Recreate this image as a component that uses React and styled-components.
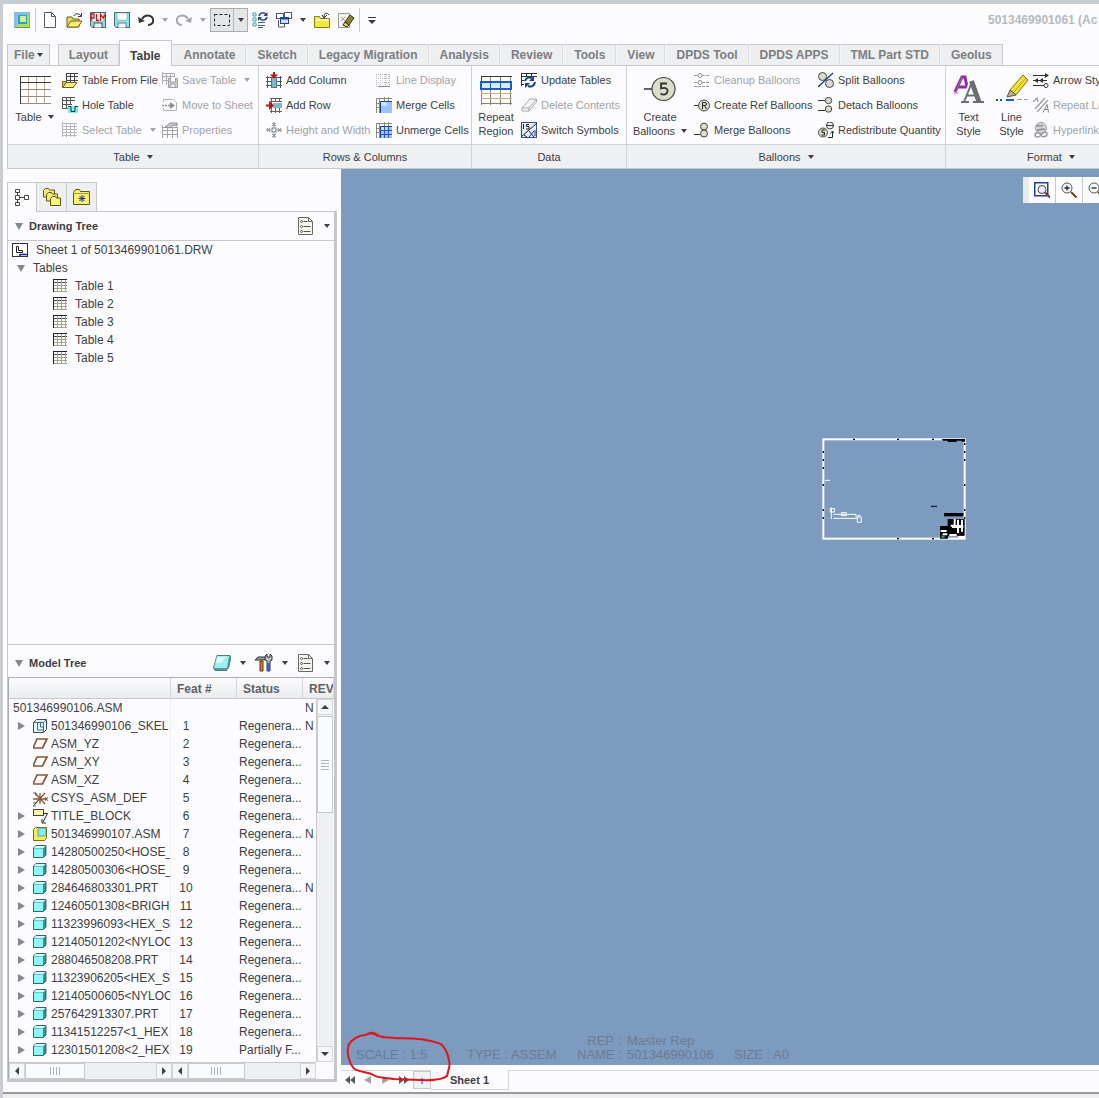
import React from "react";
import styled, { createGlobalStyle } from "styled-components";

const GlobalStyle = createGlobalStyle`
  * { box-sizing: border-box; }
  body {
    margin: 0;
    overflow: hidden;
    background: #fcfcfe;
    color: #3c3e42;
    font-family: "Liberation Sans", Arial, sans-serif;
    font-size: 11px;
  }
  button {
    font: inherit;
    color: inherit;
    background: none;
    border: 0;
    padding: 0;
    margin: 0;
  }
`;

/* ---------- icons ---------- */

const Svg = styled.svg`
  display: block;
  flex: none;
`;

const smallGrid = (
  <>
    <path d="M.5 0v13M0 .5h15" stroke="#222" fill="none" />
    <path d="M0 3.500h15" stroke="#444" fill="none" />
    <path d="M4.500 1v12M8.500 1v12M12.500 1v12M1 6.500h14M1 9.500h14M1 12.500h14" stroke="#a3a48c" fill="none" />
  </>
);

const greyGrid = (
  <path d="M.5 0v15M0 1.500h15M0 4.500h15M4.500 1v14M8.500 1v14M12.500 1v14M0 7.500h15M0 10.500h15M0 13.500h15" stroke="#b5b7ba" fill="none" />
);

const blueCells = (
  <>
    <path d="M0 1.500h16M.5 1v15M3.500 1v15M0 6.500h4M0 10.500h4M8.500 0v4M12.500 0v4" stroke="#888a78" fill="none" />
    <path d="M4 4h12v12H4z" fill="#9cc4f6" />
    <path d="M4 4h7v5H4z" fill="#cfe3fc" />
    <path d="M4.500 16V4.500H16" stroke="#1e3f9c" fill="none" />
  </>
);

const icons = {
  app: (
    <>
      <rect width="16" height="16" fill="#b4dc50" />
      <path d="M0 0h16v3H3v13H0z" fill="#8bbce0" />
      <rect x="4" y="3" width="9" height="9" fill="#2aa0c8" />
      <rect x="6" y="4" width="6" height="6" fill="#d5ee90" />
      <path d="M1 15.500h15V2" stroke="#5fa048" fill="none" />
    </>
  ),
  newFile: <path d="M2.500.5h7l4 4v11h-11zM9.500.5v4h4" fill="#fff" stroke="#55585c" />,
  open: (
    <>
      <path d="M1 5h5l1 2h6v8H1z" fill="#e9d85c" stroke="#6e6215" />
      <path d="M1 15l4-6h11l-4 6z" fill="#fff07a" stroke="#6e6215" />
      <path d="M8 4c1-3 5-3 7 0M15.500 1v3.500H12" stroke="#333" fill="none" />
    </>
  ),
  plm: (
    <>
      <path d="M.5.5h15v15H2l-1.500-2z" fill="#8cdce4" stroke="#466" />
      <rect x="3" y="1" width="10" height="8" fill="#fff" />
      <rect x="4" y="11" width="8" height="5" fill="#eee" stroke="#555" />
      <path d="M1 9V2h3v4H1M6.500 2v6.500H9M10.500 9V2L13 6l2.500-4v7" stroke="#d01818" strokeWidth="1.300" fill="none" />
    </>
  ),
  save: (
    <>
      <path d="M.5.500h15v15H2l-1.500-2z" fill="#8ce4ea" stroke="#3f6a70" />
      <rect x="3" y="1" width="10" height="7" fill="#fff" stroke="#7aa" strokeWidth=".6" />
      <rect x="4" y="11" width="8" height="5" fill="#f4f4f4" stroke="#567" strokeWidth=".8" />
    </>
  ),
  undo: (
    <>
      <path d="M4 7c3-5 10-4 11 0 1 4-2 6-5 6" stroke="#333" strokeWidth="2" fill="none" />
      <path d="M0 5l1 6 6-2z" fill="#333" />
    </>
  ),
  redo: (
    <>
      <path d="M12 7C9 2 2 3 1 7c-1 4 2 6 5 6" stroke="#a4a6a9" strokeWidth="2" fill="none" />
      <path d="M16 5l-1 6-6-2z" fill="#a4a6a9" />
    </>
  ),
  marquee: <rect x=".5" y="2.500" width="15" height="11" fill="none" stroke="#222" strokeDasharray="3 2" />,
  regen: (
    <>
      <path d="M1 1h3v3H1zM1 6h3v3H1zM1 11h3v3H1z" fill="#e6fafa" stroke="#3aa" />
      <path d="M6 10.500h7M6 13.500h7M6 15.500h5" stroke="#556" />
      <path d="M7 4c1-4 6-4 7-1M15 5c-1 4-6 4-7 1" stroke="#24408c" strokeWidth="1.500" fill="none" />
      <path d="M15.500 0v4h-4zM6 9V5h4z" fill="#24408c" />
    </>
  ),
  windows: (
    <>
      <rect x=".5" y="1.500" width="7" height="5" fill="#fff" stroke="#556" />
      <rect x="8.500" y=".5" width="7" height="6" fill="#fff" stroke="#556" />
      <rect x="4.500" y="5.500" width="8" height="6" fill="#cfe0f8" stroke="#1e3f9c" />
      <path d="M4 6.500h9" stroke="#1e3f9c" strokeWidth="2" />
      <path d="M2.500 8v7h6v-3" fill="none" stroke="#556" />
    </>
  ),
  folderUp: (
    <>
      <path d="M.5 4.500h5l1 2h9v9H.500z" fill="#f4e63c" stroke="#8a7c10" />
      <path d="M2 8h13" stroke="#fffac0" strokeWidth="2" />
      <path d="M15 3c-2-3-5-2-5 2M8 3l2 3 3-3" stroke="#222" fill="none" />
    </>
  ),
  eraseDisplay: (
    <>
      <path d="M.5 1.500h11v14H.5z" fill="#f4f4ea" stroke="#999" />
      <path d="M3 5l4 4M7 5l-4 4" stroke="#aaa" />
      <path d="M7 10l5-7 4 3-5 7z" fill="#8a8424" stroke="#333" />
      <path d="M5 13l2-3 4 3-2 2z" fill="#e9d85c" stroke="#222" />
    </>
  ),
  tableBig: (
    <>
      <path d="M9.500 2v28M17.500 2v28M25.500 2v28" stroke="#b5a995" fill="none" />
      <path d="M1 15.500h31M1 22.500h31M1 29.500h31" stroke="#8f8f7a" fill="none" />
      <path d="M1 2.500h31M1 8.500h31M1.500 2v28" stroke="#3a3a32" fill="none" />
    </>
  ),
  tableFile: (
    <>
      <g transform="translate(4 1)"><path d="M.5 0v12M0 .5h12M0 3.500h12M4.500 0v12M8.500 0v12M0 7.500h12" stroke="#444" fill="none" /></g>
      <path d="M.5 9.500h4l1 2h6v4H.5z" fill="#d8c85c" stroke="#6e6215" />
      <path d="M1 15.500l3-5h11l-4 5z" fill="#fdf07c" stroke="#6e6215" />
    </>
  ),
  holeTable: (
    <>
      <path d="M.5 0v12M0 .500h13M0 3.500h13M4.500 0v12M8.500 0v8M0 7.500h10M0 11.500h6" stroke="#555" fill="none" />
      <path d="M6 9h10v7H6z" fill="#7df0f6" />
      <path d="M6 9.500h3v5h4v-5h3" stroke="#134" fill="none" />
    </>
  ),
  selectTable: greyGrid,
  saveTable: (
    <>
      <path d="M.5 0v12M0 1.500h13M0 4.500h13M4.500 1v12M8.500 1v5M12.500 1v4M0 8.500h7" stroke="#a9abad" fill="none" />
      <path d="M6.500 6.500h9v9h-9z" fill="#d0d1d2" stroke="#9c9ea0" />
      <path d="M8.500 6v4h5V6M9 15v-3h4v3" fill="#fff" stroke="#9c9ea0" />
    </>
  ),
  moveSheet: (
    <>
      <path d="M1.500 5V2.500h10l3 3v8h-13V11" fill="none" stroke="#b0b2b4" />
      <path d="M0 8.500h2M3 8.500h2M6 8.500h4" stroke="#8a8c8f" strokeWidth="1.500" />
      <path d="M8 5l5 3.500L8 12z" fill="#8a8c8f" />
    </>
  ),
  properties: (
    <>
      <path d="M.5 3v13M0 5.500h16M0 8.500h16M5.500 6v10M10.500 6v10M15.500 6v10M0 12.500h16" stroke="#a0a2a5" fill="none" />
      <path d="M3 5l5-4h7v3l-4-1-3 3z" fill="#c8caca" stroke="#8d8f91" />
    </>
  ),
  addColumn: (
    <>
      <path d="M0 5.500h16M0 9.500h5M11 9.500h5M0 13.500h5M11 13.500h5M1.500 4v12M14.500 4v12" stroke="#555" fill="none" />
      <rect x="5.500" y="5.500" width="5" height="10" fill="#7fb8cc" stroke="#467c90" />
      <path d="M8 0v4" stroke="#c21414" strokeWidth="2" />
      <path d="M4 2.500h8L8 7z" fill="#c21414" />
    </>
  ),
  addRow: (
    <>
      <path d="M4 1.500h12M4 4.500h12M5.500 1v15M9.500 1v4M13.500 1v4M4 14.500h12M9.500 11v5M13.500 11v5" stroke="#665f50" fill="none" />
      <rect x="7" y="6" width="9" height="5" fill="#7fb8cc" />
      <path d="M0 8.500h4" stroke="#c21414" strokeWidth="2" />
      <path d="M3 4v9l5-4.500z" fill="#c21414" />
    </>
  ),
  heightWidth: (
    <>
      <rect x="6" y="6" width="4" height="4" fill="none" stroke="#777" />
      <path d="M8 0v5M6 1l4 3M10 1L6 4M8 11v5M6 12l4 3M10 12l-4 3M0 8h5M1 6l3 4M1 10l3-4M11 8h5M12 6l3 4M12 10l3-4" stroke="#808285" strokeWidth=".9" />
    </>
  ),
  lineDisplay: (
    <>
      <path d="M.5 2v13M0 2.500h14M4.500 2v12M9.500 2v12M13.500 2v12M0 6.500h14M0 10.500h14" stroke="#b4b6b8" strokeDasharray="1 1" fill="none" />
      <path d="M2 14.500h12" stroke="#888" />
    </>
  ),
  mergeCells: blueCells,
  unmergeCells: (
    <>
      {blueCells}
      <path d="M8.500 4v12M12.500 4v12M4 8.500h12M4 12.500h12" stroke="#2b55b8" fill="none" />
    </>
  ),
  repeatBig: (
    <>
      <path d="M1.500 2v29M10.500 2v29M20.500 2v29M30.500 2v29M1 29.500h31" stroke="#85856a" fill="none" />
      <path d="M1 2.500h31M1.500 2v6" stroke="#3a3a32" fill="none" />
      <path d="M1 19.500h31M1 24.500h31" stroke="#d4a878" fill="none" />
      <rect x="1" y="8" width="30" height="7" fill="#d4ecfc" stroke="#1b5cc4" strokeWidth="2" />
      <path d="M10.500 9v5M20.500 9v5" stroke="#1b5cc4" />
    </>
  ),
  updateTables: (
    <>
      <path d="M.5 1v13M0 1.500h16M0 4.500h16M5.500 1v3M10.500 1v3M0 8.500h3M0 12.500h3" stroke="#333" fill="none" />
      <path d="M4 9c1-4 5-4 7-3M14 10c-1 5-5 5-7 4" stroke="#173f9c" strokeWidth="2" fill="none" />
      <path d="M13 4v5H8zM4 16v-5h5z" fill="#173f9c" />
    </>
  ),
  deleteContents: (
    <>
      <path d="M1 11L9 2h6.500v3L8 14H1z" fill="#f5f5f5" stroke="#a5a7a9" />
      <path d="M1 11h7l7.500-9M8 11v3" stroke="#a5a7a9" fill="none" />
    </>
  ),
  switchSymbols: (
    <>
      <rect x=".5" y=".5" width="15" height="15" fill="#e4eefa" stroke="#3a4a8a" />
      <path d="M2.500 2v5M8 2.500H5.500v2H8V7H5M0 15L16 1" stroke="#222" fill="none" />
      <path d="M8 9l5 6M13 9l-5 6M14 8v6M3 13l3 2" stroke="#1c2c80" />
    </>
  ),
  balloonBig: (
    <>
      <path d="M0 15h8" stroke="#333" strokeWidth="1.500" />
      <circle cx="19.500" cy="15" r="11.500" fill="#dcdccb" stroke="#444" strokeWidth="1.200" />
      <path d="M23 9.500h-6v5c5-1.500 7 .5 6.500 3-.5 3-4 4-7 2" stroke="#333" strokeWidth="1.800" fill="none" />
    </>
  ),
  cleanup: (
    <>
      <path d="M0 3.500h3M8 3.500h8M0 10.500h3M8 10.500h8M0 14.500h16" stroke="#999" strokeDasharray="3 1" />
      <circle cx="6" cy="3.500" r="2" fill="#fff" stroke="#888" />
      <circle cx="6" cy="10.500" r="2" fill="#fff" stroke="#888" />
    </>
  ),
  refBalloon: (
    <>
      <path d="M0 8.500h5" stroke="#333" />
      <circle cx="10" cy="8.500" r="5.500" fill="#dcdccb" stroke="#444" />
      <path d="M8.500 12V5.500h2.500c2 0 2 3 0 3H8M10.500 8.500L12.500 12" stroke="#222" fill="none" />
    </>
  ),
  mergeBalloons: (
    <>
      <path d="M0 12.500h6" stroke="#333" />
      <circle cx="10" cy="4.500" r="3.500" fill="#dcdccb" stroke="#444" />
      <circle cx="10" cy="11.500" r="3.500" fill="#dcdccb" stroke="#444" />
    </>
  ),
  splitBalloons: (
    <>
      <circle cx="4.500" cy="4.500" r="4" fill="#dcdccb" stroke="#444" />
      <circle cx="11.500" cy="11.500" r="4" fill="#dcdccb" stroke="#444" />
      <path d="M0 15L15 1" stroke="#2038a0" strokeWidth="1.300" />
    </>
  ),
  detachBalloons: (
    <>
      <path d="M0 3.500h7M0 13.500h7" stroke="#333" />
      <circle cx="10.500" cy="3.500" r="3.200" fill="#dcdccb" stroke="#444" />
      <circle cx="10.500" cy="12" r="3.200" fill="#dcdccb" stroke="#444" />
    </>
  ),
  redistribute: (
    <>
      <circle cx="12" cy="3.500" r="3.500" fill="#eee" stroke="#444" />
      <path d="M8 3.500h8" stroke="#333" />
      <circle cx="5" cy="10.500" r="4.500" fill="#dcdccb" stroke="#444" />
      <path d="M7 8H4v2.500h2.500V13H3.500M10 15.500h4.500V10M12.500 11.500l2-2.500 2 2.500" stroke="#222" fill="none" />
    </>
  ),
  textStyle: (
    <>
      <path d="M2 18L9 3h3l3 15M5 13h8" stroke="#8b2fa0" strokeWidth="3" fill="none" />
      <path d="M1 19h4M12 19h4M3 18L9 3" stroke="#b45cc8" />
      <path d="M11 28l7.500-20M18 7l8 21" stroke="#fcfcfe" strokeWidth="5" />
      <path d="M11 28l8-20" stroke="#6c6e72" strokeWidth="2" />
      <path d="M18.500 7l7.500 21" stroke="#6c6e72" strokeWidth="5" />
      <path d="M13 21.500h10M8 28h8M20 28h11" stroke="#6c6e72" strokeWidth="2" />
    </>
  ),
  lineStyle: (
    <>
      <path d="M0 26h2M4 26h2" stroke="#1b4fc4" strokeWidth="2" />
      <path d="M10 26h8" stroke="#1b5cc4" strokeWidth="2" />
      <path d="M21 25.500h5M28 25.500h4" stroke="#999" />
      <path d="M14 16L27 1l5 5-12 15z" fill="#f5e03a" stroke="#7c7014" />
      <path d="M18 18L30 4" stroke="#b09c18" />
      <path d="M14 16l-3 7 9-2z" fill="#c9ac8c" stroke="#555" />
    </>
  ),
  arrowStyle: (
    <>
      <path d="M0 3.500h14M0 8.500h14M0 13.500h11" stroke="#333" strokeWidth="1.200" />
      <path d="M12 1l4 2.500L12 6zM5 6L1 8.500 5 11zM10 6L6 8.500l4 2.500z" fill="#333" />
      <circle cx="13" cy="13.500" r="2" fill="#fff" stroke="#333" />
    </>
  ),
  repeatLast: (
    <>
      <path d="M0 5l4-4 1 4M2 12L12 1M4 15L15 3" stroke="#999b9e" strokeWidth="1.200" fill="none" />
      <path d="M10 15.500l4-8 1.500 8M11 12.500h4" stroke="#808285" fill="none" />
    </>
  ),
  hyperlink: (
    <>
      <circle cx="8" cy="6" r="5.500" fill="#d4d5d6" stroke="#9c9ea0" />
      <path d="M3 4c3-2 4 2 7-1M4 8c3 1 5-3 8 0" stroke="#8a8c8f" fill="none" strokeWidth="1.500" />
      <path d="M2 13c0-3 5-3 6 0s6 2 6-1-4-2-5 0-6 5-7 1z" fill="none" stroke="#999b9e" strokeWidth="1.500" />
    </>
  ),
  treeTab: (
    <>
      <path d="M4.500 4v10M6 8.500h5" stroke="#444" />
      <path d="M2.500 0.500h4v3h-4zM2.500 6.500h4v4h-4zM2.500 13.500h4v3h-4zM11.500 6.500h4v4h-4z" fill="#fff" stroke="#444" />
    </>
  ),
  foldersTab: (
    <>
      <path d="M.5 2.500l2-2h3l1 1.500h5v7H.500z" fill="#f2e880" stroke="#5e5614" />
      <path d="M3.500 6.500l2-2h3l1 1.500h5v7h-11z" fill="#f2e880" stroke="#5e5614" />
      <path d="M7.500 10.500l2-2h3l1 1.500h4v7.500h-10z" fill="#faf27a" stroke="#5e5614" />
    </>
  ),
  favTab: (
    <>
      <path d="M.5 4.500l2-3h4l1 2h9v13H.5z" fill="#faf26a" stroke="#5e5614" />
      <path d="M.5 5.500h16" stroke="#a89c30" />
      <path d="M9 7v7M5.500 10.500h7M6.500 8l5 5M11.500 8l-5 5" stroke="#2030b0" />
    </>
  ),
  settings: (
    <>
      <path d="M1.500.5h10l4 4v13h-14zM11.500.5v4h4" fill="#f6f7ec" stroke="#666" />
      <path d="M6.500 4.500h4M6.500 9.500h7M6.500 14.500h7" stroke="#555" />
      <circle cx="4.500" cy="4.500" r="1" fill="none" stroke="#555" />
      <circle cx="4.500" cy="9.500" r="1" fill="none" stroke="#555" />
      <circle cx="4.500" cy="14.500" r="1" fill="none" stroke="#555" />
    </>
  ),
  layerCube: (
    <>
      <path d="M4 1.500h13l1 1-2 10-2.500 4H2L.5 14z" fill="#4f9c9c" stroke="#577" />
      <path d="M4 2h12l-2 12H1z" fill="#9ff0f0" />
      <path d="M4.500 3H13L8 9H3z" fill="#d6fcfc" />
    </>
  ),
  tools: (
    <>
      <path d="M0 6l3-3h8l1 2-3 1H3z" fill="#9aa0a4" stroke="#333" />
      <path d="M5 7h3v10H5z" fill="#e07828" stroke="#6a3010" />
      <path d="M12 0v3h3V0l2 2v4l-2 1v10h-3V7l-2-1V2z" fill="#b4bcc4" stroke="#333" />
      <path d="M12 9h3v8h-3z" fill="#2c66c8" />
    </>
  ),
  sheet: (
    <>
      <rect x=".5" y="1.500" width="15" height="13" fill="#fff" stroke="#333" />
      <path d="M4.500 4.500v6h6v-2H6.500v-4z" fill="#fff" stroke="#222" />
      <path d="M8 14.500v-2h7" stroke="#1a1aa8" fill="none" strokeWidth="1.500" />
    </>
  ),
  table: smallGrid,
  skeleton: (
    <>
      <path d="M.5 3.500l3-3h10v10l-3 3H.500z" fill="#e6fafa" stroke="#446" />
      <path d="M.5 3.500h10v10M10.500 3.500l3-3M4.500 4v7h6M7.500 3v5h3" stroke="#377" fill="none" />
    </>
  ),
  plane: <path d="M4 2h10l-4.500 9H0z" fill="none" stroke="#8a5434" strokeWidth="1.700" />,
  csys: (
    <>
      <path d="M2 2l10 11M12 2L2 13M0 8h14M7 2v11" stroke="#8a5434" strokeWidth="1.300" />
      <path d="M0 2h3v3M12 6l3 4M15 6l-3 4M0 12h3l-3 3h3" stroke="#444" fill="none" strokeWidth=".8" />
    </>
  ),
  note: (
    <>
      <rect x=".5" y=".5" width="10" height="6" fill="#fcf6a0" stroke="#444" />
      <path d="M10 4.500h4.500L10 13M9 10v4h4" stroke="#222" fill="none" />
    </>
  ),
  assembly: (
    <>
      <path d="M.5 2.500l2-2h11v11l-2 2H.5z" fill="#f8e85c" stroke="#806c10" />
      <path d="M5 2l1-1h7v7l-1 1H5z" fill="#7ef0f4" stroke="#377" strokeWidth=".6" />
    </>
  ),
  part: (
    <>
      <path d="M.5 3l2.500-2.500h10v9.500l-2.500 2.500H.5z" fill="#3f8f92" stroke="#2c6a6e" />
      <path d="M1 3.500h9v8.500H1z" fill="#8cfafa" />
      <path d="M1 3L3 1h9.500l-2 2z" fill="#d8ffff" />
    </>
  ),
  refit: (
    <>
      <rect x=".75" y=".75" width="13" height="13" fill="#fff" stroke="#24408c" strokeWidth="1.500" />
      <circle cx="8" cy="7.500" r="4" fill="#eef" stroke="#444" />
      <path d="M11 10.500l5 5" stroke="#7a3c20" strokeWidth="2" />
    </>
  ),
  zoomIn: (
    <>
      <circle cx="6" cy="6" r="5" fill="#f4f6fa" stroke="#555" />
      <path d="M3.500 6h5M6 3.500v5" stroke="#222" strokeWidth="1.300" />
      <path d="M10 10l5.500 5.500" stroke="#7a3c20" strokeWidth="2" />
    </>
  ),
  zoomOut: (
    <>
      <circle cx="6" cy="6" r="5" fill="#f4f6fa" stroke="#555" />
      <path d="M3.500 6h5" stroke="#222" strokeWidth="1.300" />
      <path d="M10 10l5.500 5.500" stroke="#7a3c20" strokeWidth="2" />
    </>
  ),
};

const Icon = ({ name, size = 16 }) => (
  <Svg width={size} height={size} viewBox={`0 0 ${size} ${size}`} aria-hidden="true">
    {icons[name]}
  </Svg>
);

const Caret = styled.span`
  flex: none;
  display: inline-block;
  border: 3px solid transparent;
  border-top: 4px solid ${(p) => (p.$muted ? "#a0a3a7" : "#3c3e42")};
  border-bottom: 0;
`;

/* ---------- window ---------- */

const Window = styled.div`
  display: flex;
  flex-direction: column;
  min-height: 100vh;
  border-top: 4px solid #c6cdd2;
  border-left: 3px solid #c9ccd0;
  overflow: hidden;
`;

const TitleBar = styled.header`
  display: flex;
  justify-content: space-between;
  height: 36px;
  padding: 4px 0 0 7px;
`;

const QuickBar = styled.div`
  display: flex;
  height: 24px;
`;

const QuickButton = styled.button`
  display: flex;
  align-items: center;
  justify-content: center;
  width: ${(p) => (p.$narrow ? 14 : 24)}px;
  height: 24px;
`;

const Separator = styled.span`
  width: 1px;
  margin: 0 ${(p) => (p.$wide ? 2 : 0)}px 0 1px;
  background: #c8cacd;
`;

const SelectBox = styled.div`
  display: flex;
  border: 1px solid #a9acb0;
  background: #e4e6e8;

  button { height: 22px; width: 22px; }
  button + button { width: 14px; border-left: 1px solid #b4b6ba; }
`;

const Customize = styled.span`
  border-top: 1px solid #3c3e42;
  padding-top: 2px;
  line-height: 0;

  span { border-width: 4px 4px 0; }
`;

const Title = styled.div`
  flex: none;
  width: 111px;
  overflow: hidden;
  white-space: nowrap;
  font-size: 12px;
  font-weight: bold;
  line-height: 24px;
  color: #b6b9bd;
`;

const Tabs = styled.nav`
  display: flex;
  align-items: flex-end;
  height: 25px;
  padding-left: 4px;
`;

const Tab = styled.button`
  flex: none;
  height: ${(p) => (p.$active ? 26 : 21)}px;
  margin-bottom: ${(p) => (p.$active ? -1 : 0)}px;
  padding: ${(p) => (p.$active ? "4px 11px 0 10px" : "0 10px")};
  position: relative;
  white-space: nowrap;
  font-size: 12px;
  font-weight: bold;
  color: ${(p) => (p.$active ? "#3c3e42" : "#7b7e83")};
  background: ${(p) => (p.$active ? "#fcfcfe" : "#edeff0")};
  border-top: 1px solid #c6c9cc;
  border-left: 1px solid ${(p) => (p.$active || p.$first ? "#c6c9cc" : "#f4f5f6")};
  border-right: 1px solid ${(p) => (p.$active || p.$last ? "#c6c9cc" : "#dadcde")};
`;

const FileTab = styled(Tab)`
  display: flex;
  align-items: center;
  gap: 2px;
  padding: 0 6px;
  margin-right: 8px;
`;

const Ribbon = styled.section`
  display: flex;
  flex: none;
  margin-left: 4px;
  border: solid #c6c9cc;
  border-width: 1px 0 1px 1px;
  overflow: hidden;
`;

const Group = styled.div`
  flex: none;
  display: flex;
  flex-direction: column;
  border-right: 1px solid #cfd1d4;
`;

const GroupBody = styled.div`
  display: grid;
  grid-template-columns: ${(p) => p.$cols};
  align-items: start;
  height: 78px;
  padding: 1px 0 0 ${(p) => p.$indent || 0}px;
`;

const GroupLabel = styled.div`
  display: flex;
  align-items: center;
  justify-content: center;
  gap: 7px;
  height: 24px;
  border-top: 1px solid #cfd1d4;
  background: #eef0f1;
`;

const BigButton = styled.button`
  display: flex;
  flex-direction: column;
  align-items: center;
  padding-top: 7px;
  line-height: 14px;
`;

const BigLabel = styled.span`
  display: flex;
  align-items: center;
  gap: 6px;
  white-space: nowrap;
  &:nth-child(2) { margin-top: 4px; }
`;

const SmallButton = styled.button`
  display: flex;
  align-items: center;
  gap: 4px;
  width: 100%;
  height: 25px;
  padding-left: 1px;
  white-space: nowrap;
  color: ${(p) => (p.disabled ? "#a0a3a8" : "#3c3e42")};

  ${Caret} { margin-left: 4px; }
`;

const Small = ({ icon, off, caret, children }) => (
  <SmallButton disabled={off}>
    <Icon name={icon} />
    {children}
    {caret && <Caret $muted={off} />}
  </SmallButton>
);

const Big = ({ icon, lines, caret }) => (
  <BigButton>
    <Icon name={icon} size={32} />
    {lines.map((line, i) => (
      <BigLabel key={line}>
        {line}
        {caret && i === lines.length - 1 && <Caret />}
      </BigLabel>
    ))}
  </BigButton>
);

const RibbonGroup = ({ label, caret, cols, indent, children }) => (
  <Group>
    <GroupBody $cols={cols} $indent={indent}>{children}</GroupBody>
    <GroupLabel>
      {label}
      {caret && <Caret />}
    </GroupLabel>
  </Group>
);

/* ---------- side panel ---------- */

const Workspace = styled.div`
  display: flex;
  flex: 1;
`;

const Side = styled.aside`
  flex: 0 0 338px;
  display: flex;
  flex-direction: column;
  padding: 13px 4px 10px 4px;
`;

const SideTabs = styled.div`
  display: flex;
  height: 29px;
`;

const SideTab = styled.button`
  display: flex;
  align-items: center;
  justify-content: center;
  position: relative;
  width: 30px;
  height: ${(p) => (p.$active ? 30 : 29)}px;
  background: ${(p) => (p.$active ? "#fcfcfe" : "#edeff0")};
  border: 1px solid #c6c9cc;
  border-bottom: 0;
  & + & { border-left: 0; }
`;

const Panel = styled.div`
  display: flex;
  flex-direction: column;
  flex: 1;
  border: solid #c4c7ca;
  border-width: 1px 3px 3px 1px;
`;

const PanelHead = styled.div`
  display: flex;
  align-items: center;
  height: ${(p) => (p.$tall ? 32 : 28)}px;
  padding: ${(p) => (p.$tall ? 4 : 0)}px 0 0 7px;
  font-weight: bold;
`;

const PanelTitle = styled.span`
  flex: 1;
  padding-left: 6px;
`;

const Twisty = styled.span`
  display: inline-block;
  border: solid transparent;
  border-width: ${(p) => (p.$open ? "7px 4px 0" : "4px 0 4px 7px")};
  border-color: ${(p) => (p.$open ? "#85888c transparent" : "transparent #85888c")};
`;

const HeadButton = styled.button`
  display: flex;
  align-items: center;
  justify-content: center;
  width: ${(p) => (p.$narrow ? 14 : 28)}px;
  height: 24px;
`;

const DrawingTree = styled.ul`
  flex: 1;
  margin: 0;
  padding: 0;
  list-style: none;
  font-size: 12px;
  border-top: 1px solid #c6c9cc;
  border-bottom: 1px solid #c6c9cc;
`;

const TreeItem = styled.li`
  display: flex;
  align-items: center;
  gap: 8px;
  height: 18px;
  padding-left: ${(p) => p.$indent}px;
`;

const ModelBox = styled.div`
  position: relative;
  border-top: 1px solid #a9acb0;
  border-left: 1px solid #a9acb0;
  overflow: hidden;
`;

const ModelTable = styled.table`
  table-layout: fixed;
  width: 100%;
  margin-bottom: 3px;
  border-collapse: separate;
  border-spacing: 0;
  font-size: 12px;

  th {
    height: 21px;
    padding: 2px 0 0 6px;
    text-align: left;
    color: #5e6166;
    background: linear-gradient(#fcfcfe, #e9ebed);
    border-right: 1px solid #d4d6d9;
    border-bottom: 1px solid #c6c9cc;
    overflow: hidden;
  }
  td {
    height: 18px;
    padding: 0 0 0 2px;
    line-height: 18px;
    white-space: nowrap;
    overflow: hidden;
  }
  td:first-child { border-right: 1px solid #ecedef; }
  td:nth-child(2) { padding: 0 36px 0 0; text-align: center; }
`;

const NameCell = styled.div`
  display: flex;
  align-items: center;
  overflow: hidden;
  padding-left: ${(p) => (p.$root ? 2 : 0)}px;
`;

const TwistySlot = styled.span`
  flex: none;
  display: flex;
  align-items: center;
  width: 21px;
  height: 18px;
  padding-left: 7px;
`;

const IconSlot = styled.span`
  flex: none;
  width: 19px;
  padding: 2px 0 0 1px;
`;

const ScrollY = styled.div`
  position: absolute;
  top: 21px;
  right: 1px;
  bottom: 17px;
  width: 17px;
  display: flex;
  flex-direction: column;
  background: #eeeff0;
  border-left: 1px solid #c6c9cc;
`;

const ScrollX = styled.div`
  display: flex;
  flex: ${(p) => p.$grow} 1 0;
  height: 17px;
  background: #eeeff0;
  border-top: 1px solid #c6c9cc;
`;

const ScrollRow = styled.div`
  display: flex;
  padding-right: 18px;
`;

const ScrollButton = styled.button`
  display: flex;
  flex: none;
  align-items: center;
  justify-content: center;
  width: 16px;
  height: 16px;
  background: #f6f7f8;
  border: 1px solid #d2d4d7;
`;

const Thumb = styled.div`
  display: flex;
  align-items: center;
  justify-content: center;
  flex: none;
  width: ${(p) => (p.$x ? p.$x : 16)}px;
  height: ${(p) => (p.$y ? p.$y : 16)}px;
  margin: ${(p) => (p.$y ? "1px 0 0" : 0)};
  background: #fafbfc;
  border: 1px solid #c6c9cc;
`;

const Spacer = styled.span`
  flex: 1;
`;

const Arrow = ({ d, color = "#3c3e42", w = 8 }) => (
  <Svg width={w} height="8" viewBox={`0 0 ${w} 8`} aria-hidden="true">
    <path d={d} fill={color} />
  </Svg>
);

const LEFT = "M6 0v8L2 4z";
const RIGHT = "M2 0v8l4-4z";

/* ---------- drawing area ---------- */

const Main = styled.main`
  flex: 1;
  display: flex;
  flex-direction: column;
  position: relative;
  min-width: 0;
`;

const Canvas = styled.div`
  flex: 1;
  display: flex;
  flex-direction: column;
  justify-content: flex-end;
  position: relative;
  background: #7d9abf;
  overflow: hidden;
`;

const ViewTools = styled.div`
  position: absolute;
  top: 8px;
  right: -11px;
  display: flex;
  padding-left: 6px;
  background: #e8eaec;

  button {
    display: flex;
    align-items: center;
    justify-content: center;
    width: 27px;
    height: 26px;
    background: #fcfcfe;
    border-right: 1px solid #c6c9cc;
  }
`;

const Drawing = styled.svg`
  position: absolute;
  left: 481px;
  top: 269px;
`;

const Legend = styled.div`
  display: grid;
  grid-template-columns: 111px 110px 157px auto;
  justify-content: start;
  align-items: end;
  padding: 0 0 3px 15px;
  font-size: 13px;
  line-height: 14px;
  color: #6b7c95;
  white-space: nowrap;
`;

const LegendPairs = styled.div`
  display: grid;
  grid-template-columns: 44px auto;
  column-gap: 6px;
  justify-content: start;

  span:nth-child(odd) { text-align: right; }
`;

const SheetBar = styled.div`
  display: flex;
  height: 27px;
  padding-top: 5px;
`;

const SheetNav = styled.div`
  display: flex;
  align-items: flex-start;
  border-top: 1px solid #d6d8da;

  button {
    display: flex;
    align-items: center;
    justify-content: center;
    width: 18px;
    height: 18px;
  }
`;

const AddSheet = styled.button`
  font-size: 13px;
  background: #f0f1f3;
  border: 1px solid #c6c9cc;
`;

const SheetTab = styled.button`
  width: 78px;
  height: 20px;
  font-weight: bold;
  border: solid #d0d2d5;
  border-width: 0 1px 1px 0;
`;

const SheetRest = styled.div`
  flex: 1;
  border-top: 1px solid #d6d8da;
`;

const RedMark = styled.svg`
  position: absolute;
  left: 4px;
  bottom: 9px;
  pointer-events: none;
`;

const BottomEdge = styled.footer`
  height: 6px;
  background: #efeff0;
  border-top: 2px solid #98999c;
`;

const tabNames = [
  "Layout", "Table", "Annotate", "Sketch", "Legacy Migration", "Analysis", "Review",
  "Tools", "View", "DPDS Tool", "DPDS APPS", "TML Part STD", "Geolus",
];

const modelRows = [
  ["501346990106_SKEL", "skeleton", true, "N"],
  ["ASM_YZ", "plane"],
  ["ASM_XY", "plane"],
  ["ASM_XZ", "plane"],
  ["CSYS_ASM_DEF", "csys"],
  ["TITLE_BLOCK", "note", true],
  ["501346990107.ASM", "assembly", true, "N"],
  ["14280500250<HOSE_", "part", true],
  ["14280500306<HOSE_", "part", true],
  ["284646803301.PRT", "part", true, "N"],
  ["12460501308<BRIGH", "part", true],
  ["11323996093<HEX_S", "part", true],
  ["12140501202<NYLOC", "part", true],
  ["288046508208.PRT", "part", true],
  ["11323906205<HEX_S", "part", true],
  ["12140500605<NYLOC", "part", true],
  ["257642913307.PRT", "part", true],
  ["11341512257<1_HEX", "part", true],
  ["12301501208<2_HEX", "part", true],
];

const QuickAccess = () => (
  <QuickBar>
    <QuickButton aria-label="Application"><Icon name="app" /></QuickButton>
    <Separator $wide />
    <QuickButton aria-label="New"><Icon name="newFile" /></QuickButton>
    <QuickButton aria-label="Open"><Icon name="open" /></QuickButton>
    <QuickButton aria-label="Save to PLM"><Icon name="plm" /></QuickButton>
    <QuickButton aria-label="Save"><Icon name="save" /></QuickButton>
    <QuickButton aria-label="Undo"><Icon name="undo" /></QuickButton>
    <QuickButton $narrow aria-label="Undo list"><Caret $muted /></QuickButton>
    <QuickButton aria-label="Redo"><Icon name="redo" /></QuickButton>
    <QuickButton $narrow aria-label="Redo list"><Caret $muted /></QuickButton>
    <SelectBox>
      <QuickButton aria-label="Select"><Icon name="marquee" /></QuickButton>
      <QuickButton aria-label="Select options"><Caret /></QuickButton>
    </SelectBox>
    <QuickButton aria-label="Regenerate"><Icon name="regen" /></QuickButton>
    <QuickButton aria-label="Windows"><Icon name="windows" /></QuickButton>
    <QuickButton $narrow aria-label="Windows list"><Caret /></QuickButton>
    <QuickButton aria-label="Working directory"><Icon name="folderUp" /></QuickButton>
    <QuickButton aria-label="Erase not displayed"><Icon name="eraseDisplay" /></QuickButton>
    <Separator />
    <QuickButton aria-label="Customize"><Customize><Caret /></Customize></QuickButton>
  </QuickBar>
);

const RibbonBar = () => (
  <Ribbon>
    <RibbonGroup label="Table" caret cols="53px 100px 97px">
      <Big icon="tableBig" lines={["Table"]} caret />
      <div>
        <Small icon="tableFile">Table From File</Small>
        <Small icon="holeTable">Hole Table</Small>
        <Small icon="selectTable" off caret>Select Table</Small>
      </div>
      <div>
        <Small icon="saveTable" off caret>Save Table</Small>
        <Small icon="moveSheet" off>Move to Sheet</Small>
        <Small icon="properties" off>Properties</Small>
      </div>
    </RibbonGroup>
    <RibbonGroup label="Rows & Columns" cols="110px 96px" indent={6}>
      <div>
        <Small icon="addColumn">Add Column</Small>
        <Small icon="addRow">Add Row</Small>
        <Small icon="heightWidth" off>Height and Width</Small>
      </div>
      <div>
        <Small icon="lineDisplay" off>Line Display</Small>
        <Small icon="mergeCells">Merge Cells</Small>
        <Small icon="unmergeCells">Unmerge Cells</Small>
      </div>
    </RibbonGroup>
    <RibbonGroup label="Data" cols="48px 106px">
      <Big icon="repeatBig" lines={["Repeat", "Region"]} />
      <div>
        <Small icon="updateTables">Update Tables</Small>
        <Small icon="deleteContents" off>Delete Contents</Small>
        <Small icon="switchSymbols">Switch Symbols</Small>
      </div>
    </RibbonGroup>
    <RibbonGroup label="Balloons" caret cols="66px 124px 128px">
      <Big icon="balloonBig" lines={["Create", "Balloons"]} caret />
      <div>
        <Small icon="cleanup" off>Cleanup Balloons</Small>
        <Small icon="refBalloon">Create Ref Balloons</Small>
        <Small icon="mergeBalloons">Merge Balloons</Small>
      </div>
      <div>
        <Small icon="splitBalloons">Split Balloons</Small>
        <Small icon="detachBalloons">Detach Balloons</Small>
        <Small icon="redistribute">Redistribute Quantity</Small>
      </div>
    </RibbonGroup>
    <RibbonGroup label="Format" caret cols="45px 41px 124px">
      <Big icon="textStyle" lines={["Text", "Style"]} />
      <Big icon="lineStyle" lines={["Line", "Style"]} />
      <div>
        <Small icon="arrowStyle">Arrow Style</Small>
        <Small icon="repeatLast" off>Repeat Last Format</Small>
        <Small icon="hyperlink" off>Hyperlink</Small>
      </div>
    </RibbonGroup>
  </Ribbon>
);

const GripX = () => (
  <Svg width="12" height="8" viewBox="0 0 12 8" aria-hidden="true">
    <path d="M1.500 0v8M4.500 0v8M7.500 0v8M10.500 0v8" stroke="#b0b3b7" />
  </Svg>
);

const HScroll = ({ grow, thumb }) => (
  <ScrollX $grow={grow}>
    <ScrollButton aria-label="Scroll left"><Arrow d={LEFT} /></ScrollButton>
    <Thumb $x={thumb}><GripX /></Thumb>
    <Spacer />
    <ScrollButton aria-label="Scroll right"><Arrow d={RIGHT} /></ScrollButton>
  </ScrollX>
);

const ModelTree = () => (
  <ModelBox>
    <ModelTable>
      <colgroup>
        <col width="162" />
        <col width="66" />
        <col width="66" />
        <col />
      </colgroup>
      <thead>
        <tr>
          <th aria-label="Name" />
          <th>Feat #</th>
          <th>Status</th>
          <th>REV</th>
        </tr>
      </thead>
      <tbody>
        <tr>
          <td><NameCell $root>501346990106.ASM</NameCell></td>
          <td />
          <td />
          <td>N</td>
        </tr>
        {modelRows.map(([name, icon, closed, rev], i) => (
          <tr key={name}>
            <td>
              <NameCell>
                <TwistySlot>{closed && <Twisty />}</TwistySlot>
                <IconSlot><Icon name={icon} /></IconSlot>
                {name}
              </NameCell>
            </td>
            <td>{i + 1}</td>
            <td>{i === 18 ? "Partially F..." : "Regenera..."}</td>
            <td>{rev}</td>
          </tr>
        ))}
      </tbody>
    </ModelTable>
    <ScrollY>
      <ScrollButton aria-label="Scroll up"><Arrow d="M0 6h8L4 2z" /></ScrollButton>
      <Thumb $y={97}>
        <Svg width="8" height="12" viewBox="0 0 8 12" aria-hidden="true">
          <path d="M0 1.500h8M0 4.500h8M0 7.500h8M0 10.500h8" stroke="#b0b3b7" />
        </Svg>
      </Thumb>
      <Spacer />
      <ScrollButton aria-label="Scroll down"><Arrow d="M0 2h8L4 6z" /></ScrollButton>
    </ScrollY>
    <ScrollRow>
      <HScroll grow={162} thumb={60} />
      <HScroll grow={144} thumb={57} />
    </ScrollRow>
  </ModelBox>
);

const SidePanel = () => (
  <Side>
    <SideTabs>
      <SideTab $active aria-label="Model tree"><Icon name="treeTab" size={18} /></SideTab>
      <SideTab aria-label="Folders"><Icon name="foldersTab" size={18} /></SideTab>
      <SideTab aria-label="Favorites"><Icon name="favTab" size={18} /></SideTab>
    </SideTabs>
    <Panel>
      <PanelHead>
        <Twisty $open />
        <PanelTitle>Drawing Tree</PanelTitle>
        <HeadButton aria-label="Settings"><Icon name="settings" size={18} /></HeadButton>
        <HeadButton $narrow aria-label="Settings list"><Caret /></HeadButton>
      </PanelHead>
      <DrawingTree>
        <TreeItem $indent={4}><Icon name="sheet" />Sheet 1 of 5013469901061.DRW</TreeItem>
        <TreeItem $indent={9}><Twisty $open />Tables</TreeItem>
        {[1, 2, 3, 4, 5].map((n) => (
          <TreeItem key={n} $indent={45}>
            <Icon name="table" size={14} />
            Table {n}
          </TreeItem>
        ))}
      </DrawingTree>
      <PanelHead $tall>
        <Twisty $open />
        <PanelTitle>Model Tree</PanelTitle>
        <HeadButton aria-label="Layers"><Icon name="layerCube" size={18} /></HeadButton>
        <HeadButton $narrow aria-label="Layers list"><Caret /></HeadButton>
        <HeadButton aria-label="Tools"><Icon name="tools" size={18} /></HeadButton>
        <HeadButton $narrow aria-label="Tools list"><Caret /></HeadButton>
        <HeadButton aria-label="Settings"><Icon name="settings" size={18} /></HeadButton>
        <HeadButton $narrow aria-label="Settings list"><Caret /></HeadButton>
      </PanelHead>
      <ModelTree />
    </Panel>
  </Side>
);

const SheetDrawing = () => (
  <Drawing width="144" height="102" viewBox="36 39 432 306" aria-hidden="true">
    <rect x="40" y="43" width="424" height="298" fill="none" stroke="#fff" strokeWidth="6" />
    <path
      d="M129 43h6M261 43h6M366 43h6M261 341h6M366 341h6M40 78v6M40 102v6M40 126v6M40 177v6M40 252v6M40 276v6M464 54v6M464 78v6M464 102v6M464 177v6M464 252v6M464 276v6"
      stroke="#000"
      strokeWidth="4"
    />
    <path d="M395 42h70v8h-8l-4-3h-12l-2 4h-24l-4-4h-12z" fill="#000" />
    <path d="M45 166h15M64 247v35M70 268h68v8M70 280h74" stroke="#fff" strokeWidth="3" fill="none" />
    <path d="M61 251h13v10H61zM94 263h15v9H94zM142 276h12v16h-12zM140 274l12-4" stroke="#fff" strokeWidth="3" fill="none" />
    <path d="M363 244h18" stroke="#000" strokeWidth="3" />
    <path d="M402 264h58v10h-58z" fill="#000" />
    <path d="M413 282h51v50h-51zM390 303h24v38h-24z" fill="#000" />
    <path d="M434 282v20h-12M444 284v40M456 284v36M392 318h18M398 328h14M418 330h22M444 336h18" stroke="#fff" strokeWidth="6" fill="none" />
    <path d="M426 300h34v9h-34z" fill="#fff" />
    <path d="M394 331h10v8h-10z" fill="#1f8c84" />
  </Drawing>
);

const App = () => (
  <>
    <GlobalStyle />
    <Window>
      <TitleBar>
        <QuickAccess />
        <Title>5013469901061 (Ac</Title>
      </TitleBar>
      <Tabs>
        <FileTab $first $last>File <Caret /></FileTab>
        {tabNames.map((name, i) => (
          <Tab key={name} $first={i === 0} $active={name === "Table"} $last={i === tabNames.length - 1}>
            {name}
          </Tab>
        ))}
      </Tabs>
      <RibbonBar />
      <Workspace>
        <SidePanel />
        <Main>
          <Canvas>
            <ViewTools>
              <button aria-label="Refit"><Icon name="refit" /></button>
              <button aria-label="Zoom in"><Icon name="zoomIn" /></button>
              <button aria-label="Zoom out"><Icon name="zoomOut" /></button>
            </ViewTools>
            <SheetDrawing />
            <Legend>
              <span>SCALE : 1:5</span>
              <span>TYPE : ASSEM</span>
              <LegendPairs>
                <span>REP :</span>
                <span>Master Rep</span>
                <span>NAME :</span>
                <span>501346990106</span>
              </LegendPairs>
              <span>SIZE : A0</span>
            </Legend>
          </Canvas>
          <SheetBar>
            <SheetNav>
              <button aria-label="First sheet"><Arrow w={12} color="#55585c" d="M6 0v8L1 4zM11 0v8L6 4z" /></button>
              <button aria-label="Previous sheet"><Arrow color="#a4a6aa" d="M7 0v8L0 4z" /></button>
              <button aria-label="Next sheet"><Arrow color="#a4a6aa" d="M0 0v8l7-4z" /></button>
              <button aria-label="Last sheet"><Arrow w={12} color="#55585c" d="M1 0v8l5-4zM6 0v8l5-4z" /></button>
              <AddSheet aria-label="Add sheet">+</AddSheet>
            </SheetNav>
            <SheetTab>Sheet 1</SheetTab>
            <SheetRest />
          </SheetBar>
          <RedMark width="108" height="53" viewBox="45 60 324 159" aria-hidden="true">
            <path
              d="M114 71c12-5 24-1 31 8C132 68 118 70 108 74 85 76 63 90 56 105c-8 25 4 60 19 73 20 10 40 8 55 17 15 10 35 7 60 12l100 4c30-1 55-6 62-15 0-11 10-26 6-41-3-25-18-55-36-57-32-10-82-14-122-13-25-5-45 1-57-10"
              fill="none"
              stroke="#e0141c"
              strokeWidth="6"
              strokeLinecap="round"
            />
          </RedMark>
        </Main>
      </Workspace>
      <BottomEdge />
    </Window>
  </>
);

export default App;
